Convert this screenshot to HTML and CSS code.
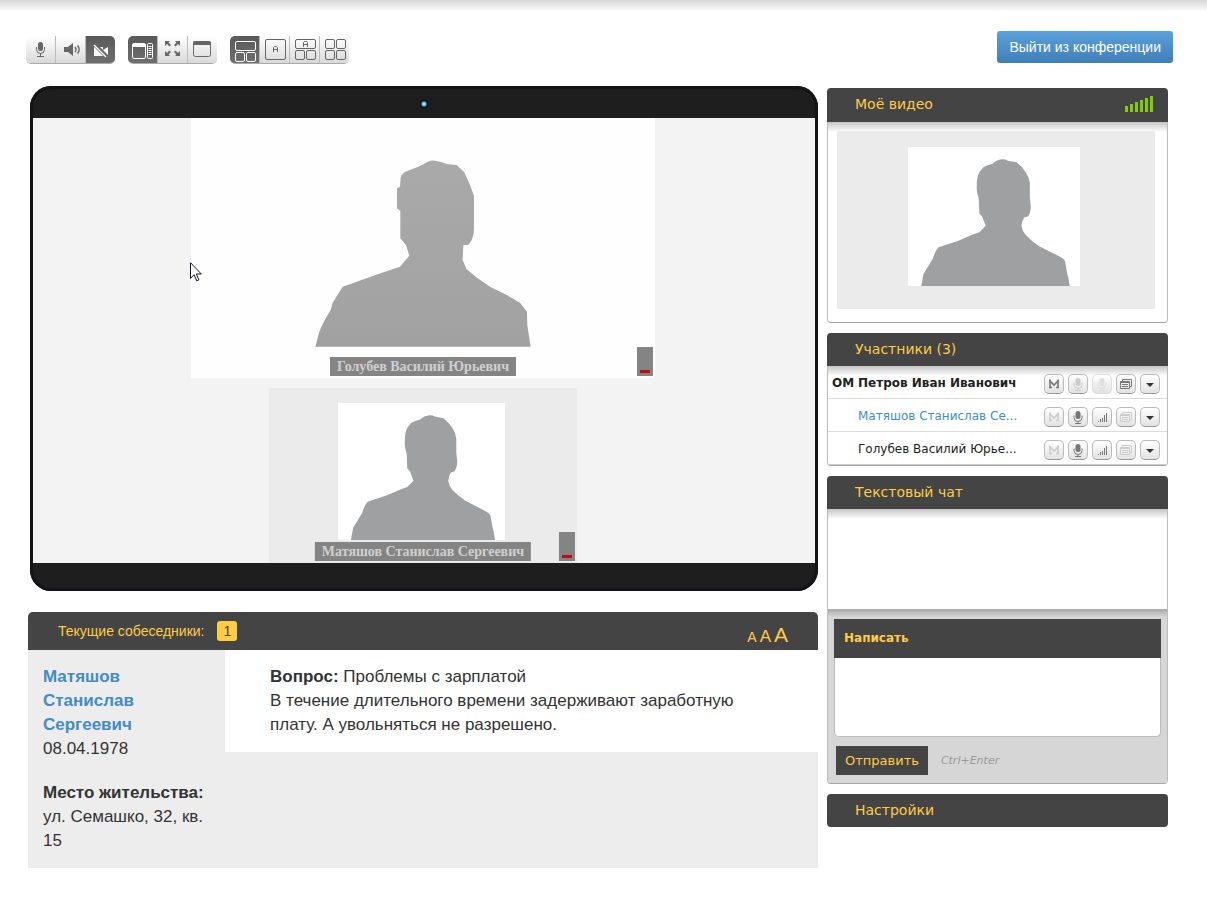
FILE: index.html
```html
<!DOCTYPE html>
<html lang="ru">
<head>
<meta charset="utf-8">
<title>Видеоконференция</title>
<link rel="stylesheet" href="styles.css">
</head>
<body>
<svg class="defs" aria-hidden="true">
  <symbol id="person" viewBox="0 0 518 416" preserveAspectRatio="none">
    <path d="M40 416L47 379L75 334Q82 310 92 300L150 281L195 262L215 255L234 236L223 207L215 199L213 154Q206 136 207 119Q207 80 220 69Q226 58 236 56L255 50Q268 38 283 37Q292 36 300 41L327 46Q345 60 355 76Q366 92 367 109L367 150L370 181Q369 198 362 207L350 211Q342 222 342 237Q344 252 355 264Q370 280 395 297L455 327Q470 334 473 342L477 364Q479 380 483 392L487 416Z"/>
  </symbol>
  <symbol id="mic" viewBox="1 1 18 18">
    <rect x="7.5" y="4" width="5" height="8" rx="2.5" fill="currentColor"/>
    <path d="M6 8.500v2a4 4 0 0 0 8 0v-2M10 14.500v2M7 16.500h6" fill="none" stroke="currentColor"/>
  </symbol>
  <symbol id="letter-m" viewBox="1 1 18 18">
    <path d="M6 14V7l4 4 4-4v7M5 13.500h3M12 13.500h3M5 6.500h2M13 6.500h2" fill="none" stroke="currentColor" stroke-width="1.600"/>
  </symbol>
  <symbol id="bars" viewBox="1 1 18 18">
    <path d="M6.500 15v-1M8.500 15v-3M10.500 15v-4M12.500 15v-7M14.500 15V6" stroke="currentColor"/>
  </symbol>
  <symbol id="windows" viewBox="1 1 18 18">
    <path d="M6.500 7V5.500h9v7H14M4.500 7.500h9v7h-9zM4.500 8.500h9M6 10.500h6M6 12.500h6" fill="none" stroke="currentColor"/>
  </symbol>
  <symbol id="arrow" viewBox="1 1 18 18"><path d="M6 9h8l-4 4z" fill="currentColor"/></symbol>
</svg>

<header class="top">
  <div class="toolbar">
    <div class="tools">
      <button class="tool" aria-label="Микрофон"><svg viewBox="0 0 30 28"><rect x="12" y="6" width="5" height="9" rx="2.500" fill="#666"/><path d="M10.500 11v2.500a4 4 0 0 0 8 0V11M14.500 17v3M11 20.500h7" fill="none" stroke="#666"/></svg></button>
      <button class="tool" aria-label="Звук"><svg viewBox="0 0 30 28"><path d="M8 11h4l5-4v13l-5-4H8z" fill="#666"/><path d="M19 11q2 2.500 0 5M21.500 9.500q3.500 4 0 8" fill="none" stroke="#666" stroke-width="1.400"/></svg></button>
      <button class="tool active" aria-label="Камера выключена"><svg viewBox="0 0 30 28"><path d="M8 11h9v3l5-3v9l-5-3v3H8z" fill="#fff"/><path d="M8 8l13 13" stroke="#656565" stroke-width="4"/><path d="M8 9l12 12" stroke="#fff" stroke-width="1.400"/></svg></button>
    </div>
    <div class="tools">
      <button class="tool active" aria-label="С боковой панелью"><svg viewBox="0 0 30 28" fill="none" stroke="#fff"><rect x="4.500" y="7.500" width="13" height="15" rx="1.500"/><path d="M5 8.500h12M5 10.500h12"/><path d="M5 9.500h12"/><rect x="19.500" y="7.500" width="5" height="15" rx="1"/><path d="M20.500 10.500h3M20.500 12.500h3M20.500 14.500h3M20.500 16.500h3M20.500 18.500h3"/></svg></button>
      <button class="tool" aria-label="На весь экран"><svg viewBox="0 0 30 28" fill="#666"><path d="M7 5h5l-1.500 1.500 2.500 2.500-1.500 1.500L9 8l-2 2zM22 5h-5l1.500 1.500L16 9l1.500 1.500L20 8l2 2zM7 20h5l-1.500-1.500L13 16l-1.500-1.500L9 17l-2-2zM22 20h-5l1.500-1.500L16 16l1.500-1.500L20 17l2-2z"/></svg></button>
      <button class="tool" aria-label="В окне"><svg viewBox="0 0 30 28"><rect x="5.500" y="5.500" width="17" height="15" rx="2" fill="none" stroke="#666"/><path d="M5 9V7q0-2 2-2h14q2 0 2 2v2z" fill="#666"/></svg></button>
    </div>
    <div class="tools">
      <button class="tool active" aria-label="Один и два"><svg viewBox="0 0 30 28" fill="none" stroke="#fff"><rect x="5.500" y="5.500" width="20" height="9" rx="1.500"/><rect x="5.500" y="16.500" width="9" height="9" rx="1.500"/><rect x="16.500" y="16.500" width="9" height="9" rx="1.500"/></svg></button>
      <button class="tool" aria-label="Один"><svg viewBox="0 0 30 28" fill="none" stroke="#666"><rect x="5.500" y="3.500" width="20" height="20" rx="1.500"/><path d="M13.500 16v-4.500l1-1h2l1 1V16M13.500 13.500h4"/></svg></button>
      <button class="tool" aria-label="Авто и два"><svg viewBox="0 0 30 28" fill="none" stroke="#666"><rect x="5.500" y="3.500" width="20" height="9" rx="1.500"/><rect x="5.500" y="14.500" width="9" height="9" rx="1.500"/><rect x="16.500" y="14.500" width="9" height="9" rx="1.500"/><path d="M13.500 11V6.500l1-1h2l1 1V11M13.500 8.500h4"/></svg></button>
      <button class="tool" aria-label="Четыре"><svg viewBox="0 0 30 28" fill="none" stroke="#666"><rect x="5.500" y="3.500" width="9" height="9" rx="1.500"/><rect x="16.500" y="3.500" width="9" height="9" rx="1.500"/><rect x="5.500" y="14.500" width="9" height="9" rx="1.500"/><rect x="16.500" y="14.500" width="9" height="9" rx="1.500"/></svg></button>
    </div>
  </div>
  <button class="leave">Выйти из конференции</button>
</header>

<main class="layout">
  <div class="left">
    <section class="screen">
      <div class="bezel"><span class="lens"></span></div>
      <div class="stage">
        <figure class="video large">
          <svg class="picture-large" viewBox="0 0 464 260" aria-hidden="true"><defs><linearGradient id="shade" x1="0" x2="0" y1="0" y2="1"><stop offset="0" stop-color="#a9a9a9"/><stop offset=".6" stop-color="#a5a5a6"/><stop offset="1" stop-color="#a1a1a1"/></linearGradient></defs><path transform="translate(99 22) scale(.3333)" fill="url(#shade)" d="M76 620L88 575Q100 545 122 510L128 488L158 440L265 402L330 380L358 347L348 315L331 295V212L321 205V145L330 140L332 112Q338 98 350 94L385 80L412 66Q424 61 435 62Q454 64 470 72L500 75L523 97L540 135L552 168V270Q550 300 535 314L520 316L518 360L530 388Q560 415 600 440L650 465L690 488L711 515L712 555L722 620Z"/></svg>
          <figcaption class="name">Голубев Василий Юрьевич</figcaption>
          <span class="level"></span>
        </figure>
        <figure class="video small">
          <svg class="picture-small" aria-hidden="true"><use href="#person"/></svg>
          <figcaption class="name">Матяшов Станислав Сергеевич</figcaption>
          <span class="level"></span>
        </figure>
        <svg class="cursor" viewBox="0 0 12 20" aria-hidden="true"><path d="M.5.700v15.600l3.600-3.500 2.600 6 2.200-1-2.600-5.800h5z" fill="#fff" stroke="#112"/></svg>
      </div>
    </section>

    <section class="talkers">
      <header class="talkers-head">
        <h2 class="talkers-title">Текущие собеседники:</h2>
        <span class="count">1</span>
        <div class="sizes"><button class="size size-s">A</button><button class="size size-m">A</button><button class="size size-l">A</button></div>
      </header>
      <div class="talkers-body">
        <div class="person">
          <a class="person-name" href="#">Матяшов Станислав Сергеевич</a>
          <p>08.04.1978</p>
          <p class="address"><b>Место жительства:</b><br>ул. Семашко, 32, кв. 15</p>
        </div>
        <div class="question">
          <p><b>Вопрос:</b> Проблемы с зарплатой</p>
          <p>В течение длительного времени задерживают заработную плату. А увольняться не разрешено.</p>
        </div>
      </div>
    </section>
  </div>

  <aside class="side">
    <section class="panel">
      <header class="panel-head first"><h2>Моё видео</h2>
        <svg class="signal" viewBox="0 0 29 16" aria-hidden="true"><path d="M1.500 16v-6M6.500 16V8M11.500 16V6M16.500 16V4M21.500 16V2M26.500 16V0" stroke="#86cc00" stroke-width="3"/></svg>
      </header>
      <div class="panel-body my-video">
        <div class="preview"><svg class="picture-me" aria-hidden="true"><use href="#person"/></svg></div>
      </div>
    </section>

    <section class="panel">
      <header class="panel-head"><h2>Участники (3)</h2></header>
      <ul class="panel-body members">
        <li class="member owner">
          <span class="role">ОМ</span><span class="who">Петров Иван Иванович</span>
          <button class="mini" aria-label="Ведущий"><svg><use href="#letter-m"/></svg></button>
          <button class="mini off" aria-label="Микрофон"><svg><use href="#mic"/></svg></button>
          <button class="mini faint" aria-label="Громкость"><svg><use href="#mic"/></svg></button>
          <button class="mini" aria-label="Окна"><svg><use href="#windows"/></svg></button>
          <button class="mini dark" aria-label="Меню"><svg><use href="#arrow"/></svg></button>
        </li>
        <li class="member">
          <span class="role"></span><a class="who" href="#">Матяшов Станислав Се...</a>
          <button class="mini off" aria-label="Ведущий"><svg><use href="#letter-m"/></svg></button>
          <button class="mini" aria-label="Микрофон"><svg><use href="#mic"/></svg></button>
          <button class="mini" aria-label="Громкость"><svg><use href="#bars"/></svg></button>
          <button class="mini off" aria-label="Окна"><svg><use href="#windows"/></svg></button>
          <button class="mini dark" aria-label="Меню"><svg><use href="#arrow"/></svg></button>
        </li>
        <li class="member">
          <span class="role"></span><span class="who">Голубев Василий Юрье...</span>
          <button class="mini off" aria-label="Ведущий"><svg><use href="#letter-m"/></svg></button>
          <button class="mini" aria-label="Микрофон"><svg><use href="#mic"/></svg></button>
          <button class="mini" aria-label="Громкость"><svg><use href="#bars"/></svg></button>
          <button class="mini off" aria-label="Окна"><svg><use href="#windows"/></svg></button>
          <button class="mini dark" aria-label="Меню"><svg><use href="#arrow"/></svg></button>
        </li>
      </ul>
    </section>

    <section class="panel">
      <header class="panel-head"><h2>Текстовый чат</h2></header>
      <div class="panel-body">
        <div class="messages"></div>
        <form class="compose">
          <label class="compose-label" for="message">Написать</label>
          <textarea class="compose-text" id="message"></textarea>
          <div class="compose-actions"><button class="send" type="button">Отправить</button><span class="hint">Ctrl+Enter</span></div>
        </form>
      </div>
    </section>

    <section class="panel">
      <header class="panel-head closed"><h2>Настройки</h2></header>
    </section>
  </aside>
</main>
</body>
</html>
```
FILE: styles.css
```css
* { box-sizing: border-box; }
body {
  margin: 0;
  color: #333;
  font-family: "Liberation Sans", Arial, sans-serif;
  background: #fff linear-gradient(#d8d8d8, #fff) 0 0 / 100% 12px no-repeat;
}
h2, p, ul, figure { margin: 0; padding: 0; font-weight: normal; }
button { margin: 0; padding: 0; border: 0; font-family: inherit; cursor: pointer; }
svg { display: block; }
a { color: #428bca; text-decoration: none; }
.defs { position: absolute; width: 0; height: 0; }

/* Top bar */
.top { display: flex; justify-content: space-between; padding: 31px 34px 0 26px; }
.toolbar { display: flex; gap: 13px; padding-top: 5px; }
.tools { display: flex; height: 28px; border-radius: 5px; overflow: hidden; border-bottom: 1px solid #aaa; }
.tool { width: 30px; overflow: hidden; background: linear-gradient(#fff, #d9d9d9); border-right: 1px solid #bbb; }
.tool:last-child { width: 29px; border-right: 0; }
.tool.active { background: linear-gradient(#5a5a5a, #6e6e6e); }
.tool svg { width: 30px; height: 28px; }
.leave {
  height: 32px; padding: 0 12px; border-radius: 3px;
  color: #fff; font-size: 14px;
  background: linear-gradient(#5ba1dc, #3f7fb8);
}

/* Columns */
.layout { display: grid; grid-template-columns: minmax(0, 1fr) 341px; gap: 9px; padding: 22px 39px 40px 28px; }

/* Conference screen */
.screen { margin-left: 2px; padding: 0 3px 28px; background: #1e1e1e; border-radius: 21px; box-shadow: inset 0 0 0 3px #131418; }
.bezel { display: flex; justify-content: center; align-items: center; height: 32px; padding-top: 4px; }
.lens { width: 8px; height: 8px; border-radius: 50%; background: radial-gradient(#bdf 15%, #2f87a5 40%, #050b10 65%); }
.stage { position: relative; display: flex; flex-direction: column; align-items: center; gap: 10px; padding-right: 2px; background: #f3f3f3; }
.video { position: relative; display: flex; justify-content: center; max-width: 100%; }
.large { width: 464px; background: #fefefe; }
.picture-large { width: 100%; }
.small { width: 308px; height: 175px; padding: 15px 3px 0 0; background: #ebebeb; }
.picture-small { width: 167px; height: 137px; background: #fff; fill: #9fa0a1; }
.name {
  position: absolute; bottom: 2px; left: 50%; transform: translateX(-50%);
  padding: 0 7px; white-space: nowrap;
  color: #d0d0d0; background: #848484;
  font: bold 14px/19px "Liberation Serif", "Times New Roman", serif;
}
.level { position: absolute; right: 2px; bottom: 2px; width: 16px; height: 29px; background: linear-gradient(#c00c0c, #c00c0c) 3px 23px / 10px 3px no-repeat #848484; }
.cursor { position: absolute; left: 157px; top: 144px; width: 12px; height: 20px; }

/* Current talkers */
.talkers { margin-top: 21px; background: #ededed; }
.talkers-head { display: flex; align-items: center; height: 38px; padding: 0 30px; border-radius: 5px 5px 0 0; background: #444; color: #fc4; }
.talkers-title { font-size: 14px; }
.count { margin-left: 13px; width: 20px; border-radius: 3px; background: #fc4; color: #444; font-size: 14px; line-height: 20px; text-align: center; }
.sizes { display: flex; align-items: baseline; gap: 3px; margin-left: auto; padding-top: 8px; }
.size { background: none; color: #fc4; }
.size-s { font-size: 14px; }
.size-m { font-size: 17px; }
.size-l { font-size: 21px; }
.talkers-body { display: flex; align-items: flex-start; font-size: 17px; line-height: 24px; }
.person { flex: 0 0 197px; padding: 15px; }
.person-name { display: block; width: 120px; font-weight: bold; }
.address { margin-top: 20px; }
.question { flex: 1; padding: 15px 45px; background: #fff; }

/* Side panels */
.side { display: flex; flex-direction: column; gap: 10px; padding-top: 2px; font-family: "DejaVu Sans", Verdana, sans-serif; }
.panel-head { display: flex; align-items: center; justify-content: space-between; height: 33px; padding: 0 14px 2px 28px; border-radius: 4px 4px 0 0; background: #444; color: #fc4; }
.panel-head.first { height: 34px; }
.panel-head.closed { border-radius: 4px; }
.panel-head h2 { font-size: 14px; }
.signal { width: 29px; height: 16px; }
.panel-body { border: 1px solid #bbb; border-top: 0; border-bottom-color: #a5a5a5; border-radius: 0 0 4px 4px; background: linear-gradient(#c4c4c4, #fff) 0 0 / 100% 10px no-repeat; overflow: hidden; }
.my-video { padding: 9px 12px 13px 9px; }
.preview { display: flex; justify-content: center; padding: 16px 4px 23px 0; background: #ebebeb; }
.picture-me { width: 172px; height: 139px; background: #fff; fill: #9fa0a1; }

.members { list-style: none; }
.member { display: flex; align-items: center; gap: 4px; height: 33px; padding: 4px 7px 0 4px; border-bottom: 1px solid #dcdcdc; font-size: 12px; color: #222; }
.member:last-child { border-bottom-color: #ccc; }
.owner { font-weight: bold; }
.role { width: 22px; white-space: nowrap; padding-bottom: 2px; }
.who { flex: 1; white-space: nowrap; padding-bottom: 2px; }
.mini { width: 20px; height: 20px; border: 1px solid #bbb; border-bottom-color: #999; border-radius: 5px; background: linear-gradient(#fff, #e2e2e2); color: #777; }
.mini svg { width: 18px; height: 18px; }
.off { color: #ccc; }
.faint { color: #e0e0e0; border-color: #ddd; }
.dark { color: #333; }

.messages { height: 100px; }
.compose { padding: 10px 6px 8px; background: #d6d6d6 linear-gradient(#a8a8a8, #d6d6d6) 0 0 / 100% 8px no-repeat; }
.compose-label { display: block; padding: 0 10px; color: #fc4; background: #444; font-size: 12px; font-weight: bold; line-height: 39px; }
.compose-text { display: block; width: 100%; height: 79px; border: 1px solid #bbb; border-top: 0; border-radius: 0 0 5px 5px; background: #fff; resize: none; font: inherit; }
.compose-actions { display: flex; align-items: center; gap: 13px; padding: 9px 2px 0; }
.send { height: 29px; padding: 0 9px; background: #444; color: #fc4; font-size: 13px; }
.hint { color: #999; font-size: 11px; font-style: italic; }
```
